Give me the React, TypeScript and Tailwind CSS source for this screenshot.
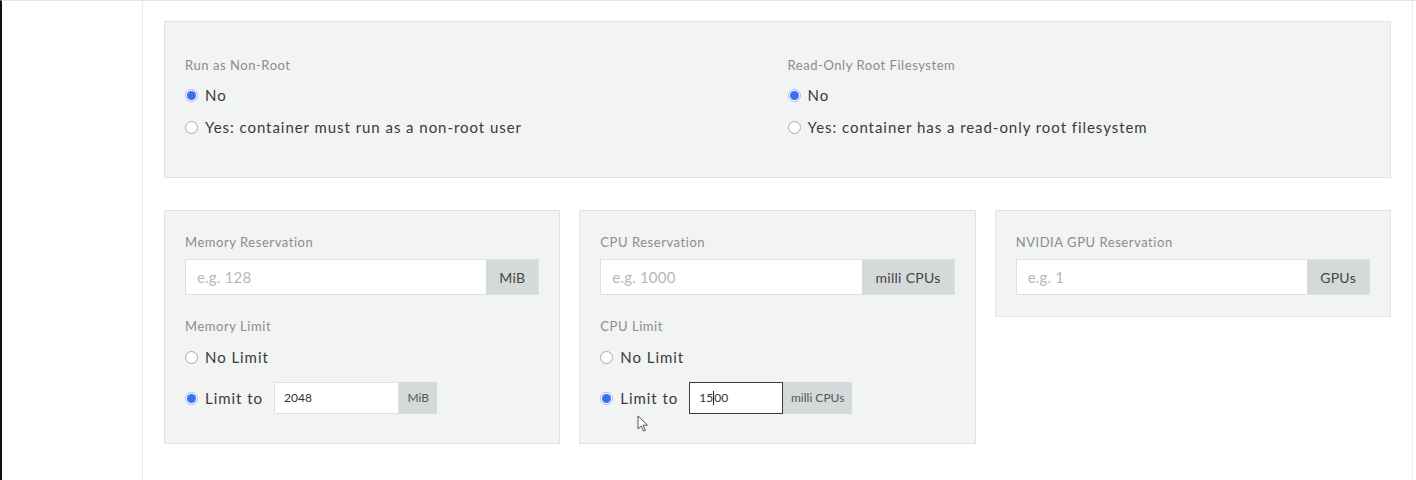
import React from 'react'

const font = { fontFamily: 'Lato, "Open Sans", sans-serif' }

function Radio({ checked, label }: { checked?: boolean; label: string }) {
  return (
    <div className="flex items-center gap-[7px]">
      {checked ? (
        <span className="w-[13px] h-[13px] rounded-full border border-[#9db8f2] bg-white flex items-center justify-center">
          <span className="w-[9px] h-[9px] rounded-full bg-[#3b6ef0]" />
        </span>
      ) : (
        <span className="w-[13px] h-[13px] rounded-full border border-[#a9a9a9] bg-white" />
      )}
      <span className="text-[15px] text-[#3a3a3a] tracking-[0.95px]">{label}</span>
    </div>
  )
}

function Label({ children }: { children: React.ReactNode }) {
  return <div className="text-[13px] leading-[18px] text-[#8c8c8c] tracking-[0.55px]">{children}</div>
}

function BigInput({ placeholder, addon }: { placeholder: string; addon: string }) {
  return (
    <div className="flex h-[36px] mt-[8px] border border-[#dde1e2]">
      <div className="flex-1 bg-white flex items-center pl-[11px] text-[15px] text-[#b7b7b7] tracking-[0.2px]">
        {placeholder}
      </div>
      <div className="bg-[#d4d9da] flex items-center px-[13px] text-[14px] text-[#444] tracking-[0.3px]">{addon}</div>
    </div>
  )
}

function LimitRow({ value, addon, focused }: { value: string; addon: string; focused?: boolean }) {
  return (
    <div className="flex items-center mt-[9px]">
      <div className="w-[89px]">
        <Radio checked label="Limit to" />
      </div>
      <div className="flex w-[163px] h-[32px]">
        <div
          className={
            focused
              ? 'relative flex-1 bg-white border border-[#3c3c3c] flex items-center pl-[9px] text-[12px] text-[#333]'
              : 'relative flex-1 bg-white border border-[#dde1e2] flex items-center pl-[9px] text-[12px] text-[#333]'
          }
        >
          {focused ? (
            <>
              15
              <span className="inline-block w-px h-[14px] bg-[#222]" />
              00
            </>
          ) : (
            value
          )}
        </div>
        <div className="bg-[#d4d9da] flex items-center px-[8px] text-[12px] text-[#555]">{addon}</div>
      </div>
    </div>
  )
}

export default function App() {
  return (
    <div
      className="w-[1416px] h-[480px] bg-white flex border-l-2 border-l-[#111] border-t border-t-[#e4e6e6] overflow-hidden"
      style={font}
    >
      <div className="w-[141px] shrink-0 border-r border-[#ececec]" />
      <div className="w-[1270px] shrink-0 border-r border-[#ececec] pt-[20px] px-[21px]">
        {/* security panel */}
        <div className="bg-[#f2f3f3] border border-[#dfe3e3] pt-[34px] pb-[34px] px-[20px] grid grid-cols-2 gap-[20px]">
          <div>
            <Label>Run as Non-Root</Label>
            <div className="flex flex-col">
              <div className="h-[32px] flex items-center mt-[5px]">
                <Radio checked label="No" />
              </div>
              <div className="h-[32px] flex items-center">
                <Radio label="Yes: container must run as a non-root user" />
              </div>
            </div>
          </div>
          <div>
            <Label>Read-Only Root Filesystem</Label>
            <div className="flex flex-col">
              <div className="h-[32px] flex items-center mt-[5px]">
                <Radio checked label="No" />
              </div>
              <div className="h-[32px] flex items-center">
                <Radio label="Yes: container has a read-only root filesystem" />
              </div>
            </div>
          </div>
        </div>

        {/* resources */}
        <div className="grid grid-cols-3 gap-x-[19px] mt-[32px] items-start">
          <div className="bg-[#f2f3f3] border border-[#dfe3e3] pt-[22px] pb-[29px] px-[20px]">
            <Label>Memory Reservation</Label>
            <BigInput placeholder="e.g. 128" addon="MiB" />
            <div className="mt-[22px]">
              <Label>Memory Limit</Label>
            </div>
            <div className="h-[32px] flex items-center mt-[6px]">
              <Radio label="No Limit" />
            </div>
            <LimitRow value="2048" addon="MiB" />
          </div>
          <div className="relative bg-[#f2f3f3] border border-[#dfe3e3] pt-[22px] pb-[29px] px-[20px]">
            <Label>CPU Reservation</Label>
            <BigInput placeholder="e.g. 1000" addon="milli CPUs" />
            <div className="mt-[22px]">
              <Label>CPU Limit</Label>
            </div>
            <div className="h-[32px] flex items-center mt-[6px]">
              <Radio label="No Limit" />
            </div>
            <LimitRow value="1500" addon="milli CPUs" focused />
            {/* mouse pointer */}
            <svg
              className="absolute left-[57px] top-[204px]"
              width="12"
              height="17"
              viewBox="0 0 12 17"
            >
              <path d="M1 1 L1 14 L4.2 11 L6.6 16 L8.4 15.2 L6 10.2 L10.5 10.2 Z" fill="#fff" stroke="#555" strokeWidth="1" strokeLinejoin="round" />
            </svg>
          </div>
          <div className="bg-[#f2f3f3] border border-[#dfe3e3] pt-[22px] pb-[21px] px-[20px]">
            <Label>NVIDIA GPU Reservation</Label>
            <BigInput placeholder="e.g. 1" addon="GPUs" />
          </div>
        </div>
      </div>
    </div>
  )
}
